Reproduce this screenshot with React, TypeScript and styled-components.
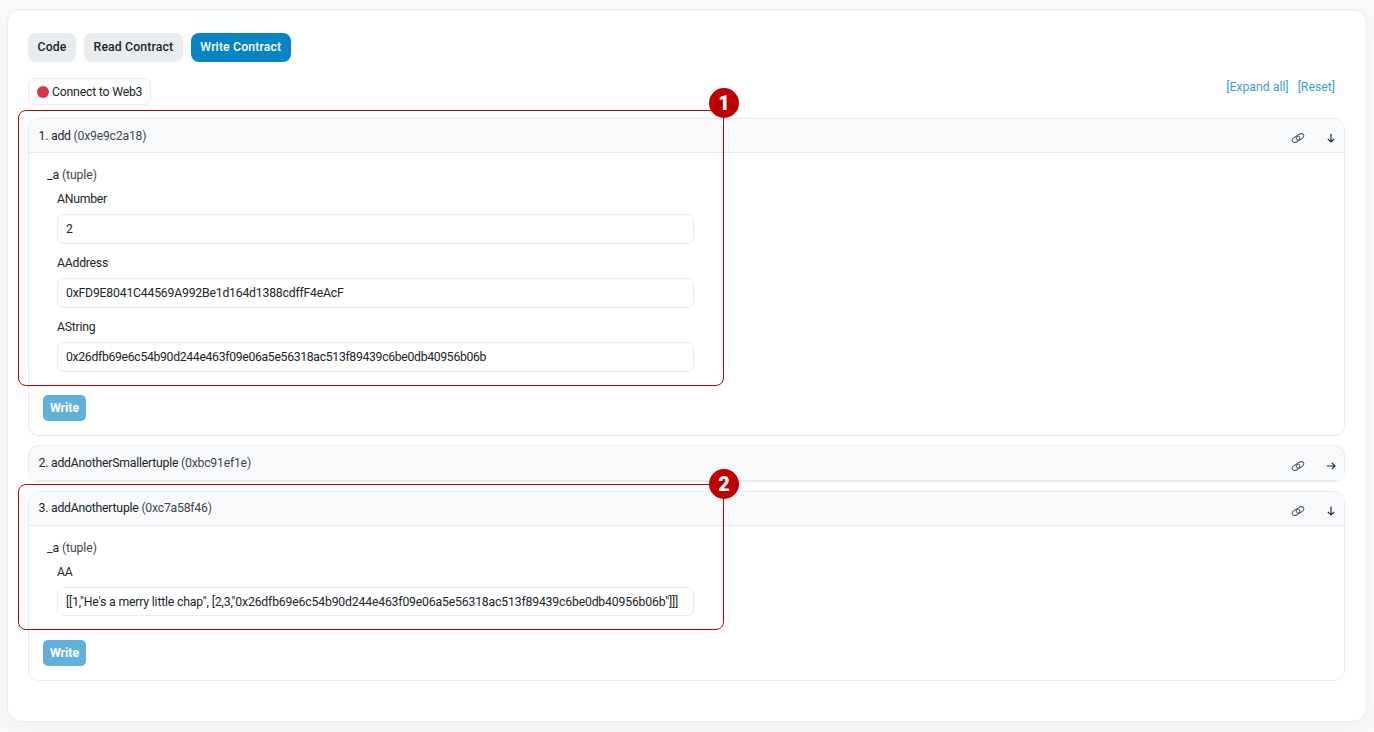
import React from 'react';
import styled, { createGlobalStyle } from 'styled-components';

const GlobalStyle = createGlobalStyle`
  html, body {
    margin: 0;
    padding: 0;
    background: #f8f9fa;
    font-family: Roboto, "Liberation Sans", sans-serif;
    font-size: 12.25px;
    color: #1f2937;
  }
`;

function LinkIcon() {
  return (
    <IconSvg width="14" height="14" viewBox="0 0 14 14" fill="none">
      <ellipse cx="5" cy="8.3" rx="4.1" ry="2.6" transform="rotate(-32 5 8.3)" stroke="#4b5563" strokeWidth="1" />
      <ellipse cx="9" cy="5.9" rx="4.1" ry="2.6" transform="rotate(-32 9 5.9)" stroke="#4b5563" strokeWidth="1" />
    </IconSvg>
  );
}

function ArrowIcon({ open }: { open: boolean }) {
  return (
    <IconSvg width="10" height="10" viewBox="0 0 10 10" fill="none" stroke="#1f2937" strokeWidth="1.2">
      {open ? (
        <path d="M5 .8v8M1.8 5.8 5 9l3.2-3.2" />
      ) : (
        <path d="M.8 5h8M5.8 1.8 9 5 5.8 8.2" />
      )}
    </IconSvg>
  );
}

function ItemHeader({ title, selector, open }: { title: string; selector: string; open: boolean }) {
  return (
    <Header $open={open}>
      <HeaderTitle>
        {title} <Selector>({selector})</Selector>
      </HeaderTitle>
      <HeaderIcons>
        <LinkIcon />
        <ArrowIcon open={open} />
      </HeaderIcons>
    </Header>
  );
}

function Field({ label, value, tracking }: { label: string; value: string; tracking: number }) {
  return (
    <FieldGroup>
      <FieldLabel>{label}</FieldLabel>
      <FieldInput readOnly value={value} $tracking={tracking} />
    </FieldGroup>
  );
}

export default function App() {
  return (
    <>
      <GlobalStyle />
      <Page>
        <Card>
          <Tabs>
            <Tab>Code</Tab>
            <Tab>Read Contract</Tab>
            <Tab $active>Write Contract</Tab>
          </Tabs>
          <Toolbar>
            <ConnectButton>
              <StatusDot />
              Connect to Web3
            </ConnectButton>
            <ToolLinks>
              <ToolLink>[Expand all]</ToolLink>
              <ToolLink>[Reset]</ToolLink>
            </ToolLinks>
          </Toolbar>

          <Accordion>
            <Item>
              <ItemHeader title="1. add" selector="0x9e9c2a18" open />
              <ItemBody>
                <TupleName>
                  _a <Selector>(tuple)</Selector>
                </TupleName>
                <Field label="ANumber" value="2" tracking={0} />
                <Field label="AAddress" value="0xFD9E8041C44569A992Be1d164d1388cdffF4eAcF" tracking={-0.21} />
                <Field
                  label="AString"
                  value="0x26dfb69e6c54b90d244e463f09e06a5e56318ac513f89439c6be0db40956b06b"
                  tracking={-0.33}
                />
                <WriteButton>Write</WriteButton>
              </ItemBody>
              <Callout $height={276} $top={-9}>
                <CalloutBadge>1</CalloutBadge>
              </Callout>
            </Item>

            <CollapsedItem>
              <ItemHeader title="2. addAnotherSmallertuple" selector="0xbc91ef1e" open={false} />
            </CollapsedItem>

            <Item>
              <ItemHeader title="3. addAnothertuple" selector="0xc7a58f46" open />
              <ItemBody>
                <TupleName>
                  _a <Selector>(tuple)</Selector>
                </TupleName>
                <Field
                  label="AA"
                  value={'[[1,"He\'s a merry little chap", [2,3,"0x26dfb69e6c54b90d244e463f09e06a5e56318ac513f89439c6be0db40956b06b"]]]'}
                  tracking={-0.18}
                />
                <WriteButton>Write</WriteButton>
              </ItemBody>
              <Callout $height={146} $top={-7.5}>
                <CalloutBadge $low>2</CalloutBadge>
              </Callout>
            </Item>
          </Accordion>
        </Card>
      </Page>
    </>
  );
}

const Page = styled.div`
  width: 1374px;
  height: 732px;
  padding: 8.5px 7px 10px 7px;
  box-sizing: border-box;
  overflow: hidden;
`;

const Card = styled.div`
  height: 713.5px;
  box-sizing: border-box;
  background: #fff;
  border: 1px solid #e9ecef;
  border-radius: 14px;
  padding: 23.5px 21px 0 20px;
  box-shadow: 0 8px 20px rgba(189, 197, 209, 0.12);
`;

const Tabs = styled.div`
  display: flex;
  gap: 8px;
`;

const Tab = styled.div<{ $active?: boolean }>`
  height: 29px;
  box-sizing: border-box;
  padding: 0 9.5px 2px;
  display: flex;
  align-items: center;
  border-radius: 8px;
  font-weight: 500;
  letter-spacing: 0.15px;
  background: ${(p) => (p.$active ? '#0784c3' : '#e9ecef')};
  color: ${(p) => (p.$active ? '#fff' : '#212529')};
`;

const Toolbar = styled.div`
  display: flex;
  justify-content: space-between;
  align-items: flex-start;
  margin-top: 16px;
`;

const ConnectButton = styled.div`
  height: 27px;
  box-sizing: border-box;
  padding: 0 8px;
  display: flex;
  align-items: center;
  gap: 3px;
  border: 1px solid #e9ecef;
  border-radius: 7px;
  color: #212529;
  letter-spacing: -0.2px;
`;

const StatusDot = styled.span`
  width: 12px;
  height: 12px;
  border-radius: 50%;
  background: #dc3545;
`;

const ToolLinks = styled.div`
  display: flex;
  gap: 9px;
  margin-top: 2px;
  padding-right: 10px;
`;

const ToolLink = styled.a`
  color: #3d9be0;
  cursor: pointer;
`;

const Accordion = styled.div`
  margin-top: 13px;
  display: flex;
  flex-direction: column;
  gap: 9px;
`;

const Item = styled.div`
  position: relative;
  border: 1px solid #e9ecef;
  border-radius: 11px;
`;

const CollapsedItem = styled(Item)`
  margin-bottom: -0.5px;
  border-bottom-width: 2px;
  background: #f8f9fa;
`;

const Header = styled.div<{ $open: boolean }>`
  height: 34px;
  box-sizing: border-box;
  padding: 0 8px 0 9.5px;
  display: flex;
  align-items: center;
  justify-content: space-between;
  background: #f8f9fa;
  border-radius: 11px 11px 0 0;
  border-bottom: ${(p) => (p.$open ? '1px solid #e9ecef' : 'none')};
`;

const HeaderTitle = styled.div`
  color: #212529;
  letter-spacing: -0.23px;
`;

const Selector = styled.span`
  color: #3f4750;
`;

const HeaderIcons = styled.div`
  display: flex;
  align-items: center;
  gap: 21px;
  padding-top: 5px;
`;

const IconSvg = styled.svg`
  display: block;
`;

const ItemBody = styled.div`
  padding: 14px 14px 14px 18px;
`;

const TupleName = styled.div`
  height: 16px;
  line-height: 16px;
  color: #212529;
  letter-spacing: -0.1px;
`;

const FieldGroup = styled.div`
  margin: 8px 0 0 10px;
  width: 637px;

  & + & {
    margin-top: 11.5px;
  }
`;

const FieldLabel = styled.div`
  height: 16px;
  line-height: 16px;
  color: #212529;
  letter-spacing: -0.25px;
`;

const FieldInput = styled.input<{ $tracking: number }>`
  display: block;
  width: 100%;
  height: 29.5px;
  margin-top: 7px;
  box-sizing: border-box;
  padding: 0.5px 8px 0;
  border: 1px solid #e9ecef;
  border-radius: 7px;
  outline: none;
  font: inherit;
  letter-spacing: ${(p) => p.$tracking}px;
  color: #212529;
  background: #fff;
`;

const WriteButton = styled.button`
  display: block;
  margin-top: 23.5px;
  margin-left: -4px;
  width: 43px;
  height: 26px;
  padding: 0;
  border: none;
  border-radius: 5px;
  background: #62b0d9;
  color: #fff;
  font: inherit;
  font-weight: 700;
`;

const Callout = styled.div<{ $height: number; $top: number }>`
  position: absolute;
  left: -11px;
  top: ${(p) => p.$top}px;
  width: 706px;
  height: ${(p) => p.$height}px;
  box-sizing: border-box;
  border: 1px solid #c00000;
  border-radius: 8px;
  pointer-events: none;
`;

const CalloutBadge = styled.div<{ $low?: boolean }>`
  position: absolute;
  right: -16px;
  top: ${(p) => (p.$low ? '-16px' : '-23px')};
  width: 30px;
  height: 30px;
  border-radius: 50%;
  background: #c00000;
  color: #fff;
  display: flex;
  align-items: center;
  justify-content: center;
  font-size: 20px;
  font-weight: 900;
`;
